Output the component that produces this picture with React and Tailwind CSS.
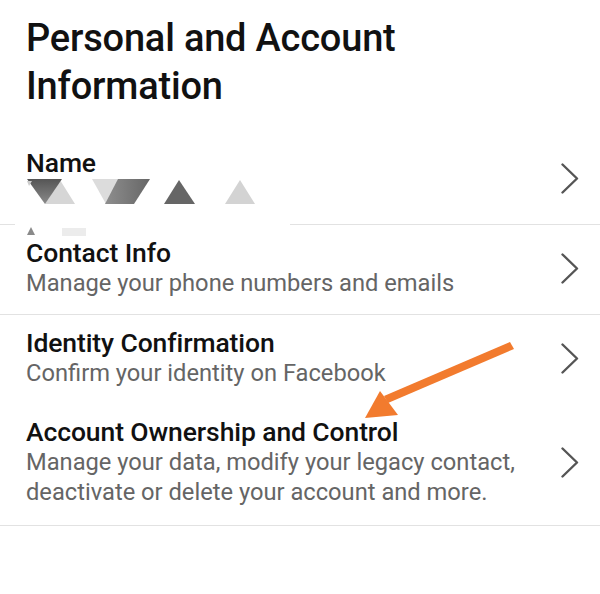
import React from 'react';

const Chevron = () => (
  <svg width="18" height="31" viewBox="0 0 18 31" className="shrink-0">
    <polyline points="1.5,1.5 16,15.5 1.5,29.5" fill="none" stroke="#555" strokeWidth="2.4" strokeLinecap="round" strokeLinejoin="round" />
  </svg>
);

const rows = [
  { title: 'Contact Info', sub: ['Manage your phone numbers and emails'], border: true },
  { title: 'Identity Confirmation', sub: ['Confirm your identity on Facebook'], border: false },
  {
    title: 'Account Ownership and Control',
    sub: ['Manage your data, modify your legacy contact,', 'deactivate or delete your account and more.'],
    border: true,
    last: true,
  },
];

const Row = ({ title, sub, border, last, children }) => (
  <div
    className={`flex items-center pl-[26px] pr-[21px] pt-[13px] ${last ? 'pb-[18px]' : 'pb-[16px]'} ${
      border ? 'border-b border-[#e2e2e2]' : ''
    }`}
  >
    <div className="flex-1 min-w-0">
      <div className="text-[26.5px] leading-[30px] font-medium text-[#111] tracking-[-0.1px]">{title}</div>
      {sub &&
        sub.map((line) => (
          <div key={line} className="text-[23.7px] leading-[30px] text-[#656565]">
            {line}
          </div>
        ))}
      {children}
    </div>
    <Chevron />
  </div>
);

export default function App() {
  return (
    <div className="relative w-[600px] h-[594px] bg-white overflow-hidden" style={{ fontFamily: 'Roboto, "Noto Sans", sans-serif' }}>
      <h1 className="pl-[26px] pt-[14px] text-[38px] leading-[48px] font-medium text-[#111] tracking-[-0.2px]">
        Personal and Account
        <br />
        Information
      </h1>

      <div className="mt-[25px]">
        <Row title="Name" border>
          <div className="h-[30px]" />
        </Row>
        {rows.map((r) => (
          <Row key={r.title} {...r} />
        ))}
      </div>

      {/* redacted name */}
      <svg className="absolute left-[15px] top-[175px]" width="275" height="66" viewBox="0 0 275 66">
        <defs>
          <linearGradient id="g1" x1="0" y1="0" x2="0" y2="1">
            <stop offset="0" stopColor="#555" />
            <stop offset="1" stopColor="#8a8a8a" />
          </linearGradient>
          <linearGradient id="g2" x1="0" y1="0" x2="1" y2="0">
            <stop offset="0" stopColor="#8e8e8e" />
            <stop offset="1" stopColor="#666" />
          </linearGradient>
        </defs>
        <rect width="275" height="66" fill="#fff" />
        <polygon points="30,29 45,5 60,29" fill="#d6d6d6" />
        <polygon points="12,4 47,4 30,29" fill="url(#g1)" />
        <polygon points="12,6 17,6 14,11" fill="#ccc" />
        <polygon points="77,4 105,4 91,29" fill="#dcdcdc" />
        <polygon points="103,4 135,4 119,29 90,29" fill="url(#g2)" />
        <polygon points="164,5 180,29 149,29" fill="#666" />
        <polygon points="225,5 240,29 210,29" fill="#d3d3d3" />
        <polygon points="16,52 20,60 12,60" fill="#8a8a8a" />
        <rect x="47" y="53" width="24" height="8" fill="#ececec" />
      </svg>

      {/* orange arrow */}
      <svg className="absolute left-0 top-0" width="600" height="594" viewBox="0 0 600 594">
        <polygon points="510,342 514,349 388,403 384,396" fill="#f27b2e" />
        <polygon points="365,418 380,391 398,415" fill="#f27b2e" />
      </svg>
    </div>
  );
}
